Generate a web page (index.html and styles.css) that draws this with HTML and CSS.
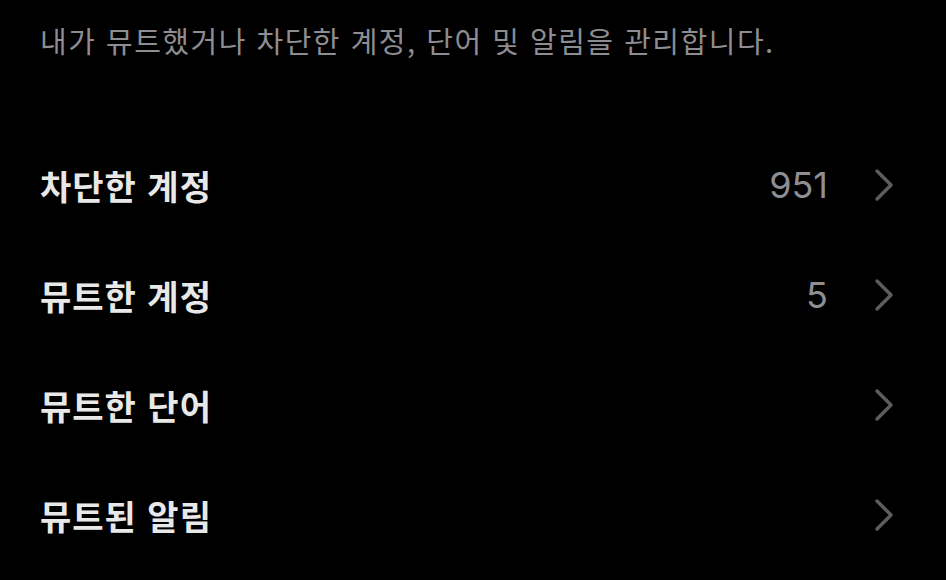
FILE: index.html
```html
<!DOCTYPE html>
<html lang="ko">
<head>
    <meta charset="utf-8">
    <title>뮤트 및 차단</title>
    <link rel="stylesheet" href="styles.css">
</head>
<body>
    <p class="desc">내가 뮤트했거나 차단한 계정, 단어 및 알림을 관리합니다.</p>

    <ul class="menu">
        <li class="menu-row">
            <span class="label">차단한 계정</span>
            <span class="count">951</span>
            <svg class="chevron" viewBox="0 0 20 34"><path d="M3 3 L17 17 L3 31"/></svg>
        </li>
        <li class="menu-row">
            <span class="label">뮤트한 계정</span>
            <span class="count">5</span>
            <svg class="chevron" viewBox="0 0 20 34"><path d="M3 3 L17 17 L3 31"/></svg>
        </li>
        <li class="menu-row">
            <span class="label">뮤트한 단어</span>
            <svg class="chevron" viewBox="0 0 20 34"><path d="M3 3 L17 17 L3 31"/></svg>
        </li>
        <li class="menu-row">
            <span class="label">뮤트된 알림</span>
            <svg class="chevron" viewBox="0 0 20 34"><path d="M3 3 L17 17 L3 31"/></svg>
        </li>
    </ul>
</body>
</html>
```

FILE: styles.css
```css
body {
    margin: 0;
    background-color: #000;
    font-family: "Noto Sans CJK KR", "Noto Sans", sans-serif;
    overflow: hidden;
}
.desc {
    margin: 0;
    padding: 20px 40px 0 40px;
    height: 110px;
    color: #8d8d92;
    font-size: 29px;
    line-height: 40px;
    letter-spacing: 1.5px;
}
.menu {
    list-style: none;
    margin: 0;
    padding: 0 52px 0 40px;
}
.menu-row {
    display: flex;
    align-items: center;
    height: 110px;
}
.label {
    flex: 1;
    color: #e8e8e8;
    font-size: 34px;
    font-weight: bold;
    letter-spacing: 1px;
}
.count {
    color: #8e8e93;
    font-family: "Inter", "Liberation Sans", sans-serif;
    font-size: 36px;
    margin-right: 46px;
}
.chevron {
    width: 20px;
    height: 34px;
    fill: none;
    stroke: #5c5c60;
    stroke-width: 3.5;
    stroke-linecap: round;
    stroke-linejoin: round;
}
```
